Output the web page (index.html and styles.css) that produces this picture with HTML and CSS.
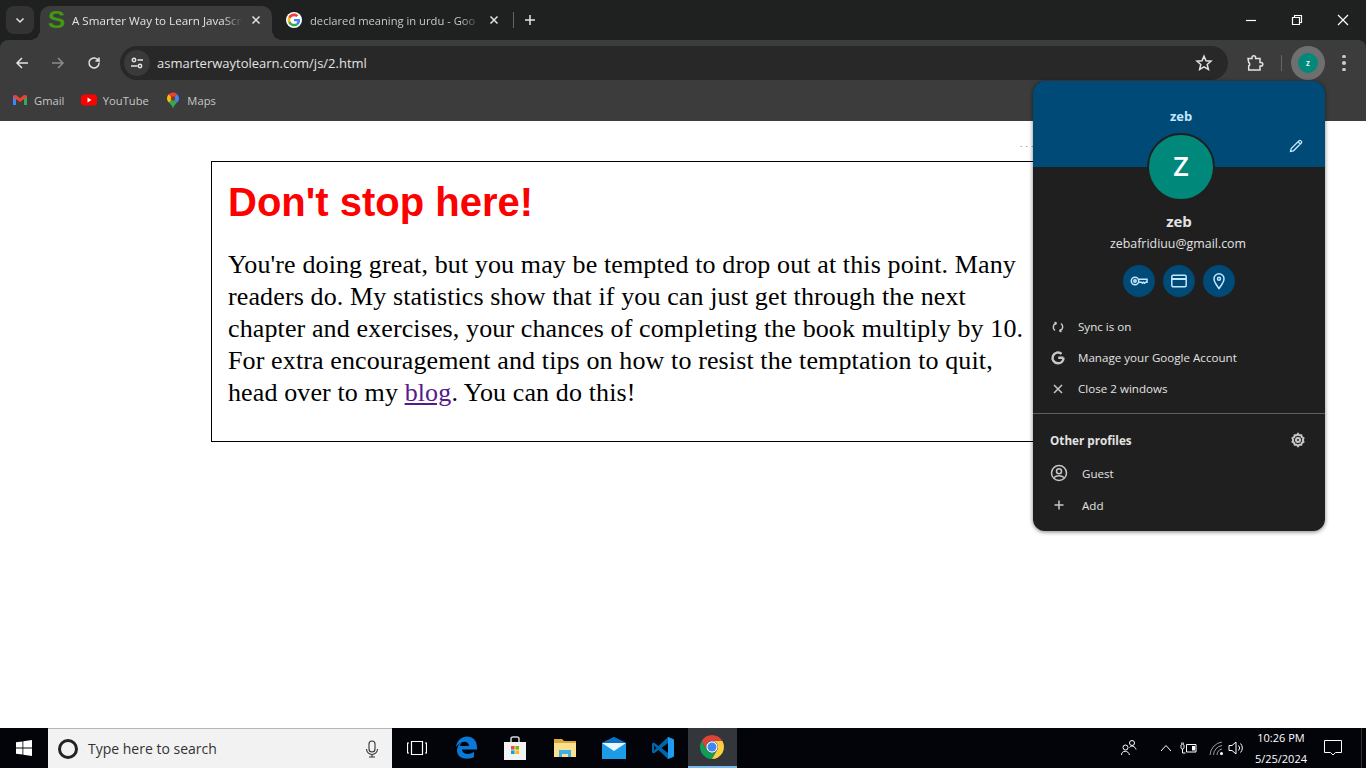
FILE: index.html
```html
<!DOCTYPE html>
<html lang="en">
<head>
    <meta charset="UTF-8">
    <title>A Smarter Way to Learn JavaScript</title>
    <link rel="stylesheet" href="styles.css">
</head>
<body>
    <!-- Browser chrome -->
    <header class="chrome">
        <div class="tabstrip">
            <button class="tab-search">
                <svg width="12" height="12" viewBox="0 0 12 12"><path d="M2.5 4.5 6 8l3.5-3.5" class="stroke-light"/></svg>
            </button>
            <div class="tab active">
                <span class="favicon-s">S</span>
                <span class="tab-title">A Smarter Way to Learn JavaScr</span>
                <svg class="tab-close" width="10" height="10" viewBox="0 0 10 10"><path d="M1.5 1.5l7 7M8.500 1.500l-7 7" class="stroke-light"/></svg>
            </div>
            <div class="tab second">
                <span class="favicon-g">
                    <svg width="16" height="16" viewBox="-6 -6 60 60"><path fill="#EA4335" d="M24 9.500c3.500 0 6.700 1.300 9.100 3.500l6.800-6.800C35.800 2.400 30.300 0 24 0 14.600 0 6.500 5.400 2.600 13.200l7.900 6.200C12.400 13.700 17.700 9.500 24 9.500z"/><path fill="#4285F4" d="M46.900 24.500c0-1.600-.1-3.100-.4-4.500H24v9h12.900c-.6 3-2.200 5.500-4.700 7.200l7.700 6c4.500-4.200 7-10.300 7-17.700z"/><path fill="#FBBC05" d="M10.500 28.600c-.5-1.500-.8-3-.8-4.600s.3-3.200.8-4.600l-7.900-6.200C.9 16.500 0 20.100 0 24s.9 7.500 2.600 10.800l7.900-6.200z"/><path fill="#34A853" d="M24 48c6.500 0 11.900-2.100 15.900-5.800l-7.700-6c-2.200 1.400-4.900 2.300-8.200 2.300-6.300 0-11.600-4.200-13.500-10l-7.900 6.200C6.500 42.600 14.600 48 24 48z"/></svg>
                </span>
                <span class="tab-title">declared meaning in urdu - Goo</span>
                <svg class="tab-close" width="10" height="10" viewBox="0 0 10 10"><path d="M1.5 1.5l7 7M8.500 1.500l-7 7" class="stroke-light"/></svg>
            </div>
            <span class="tab-divider"></span>
            <svg class="new-tab" width="12" height="12" viewBox="0 0 12 12"><path d="M6 1v10M1 6h10" class="stroke-light"/></svg>
            <div class="window-controls">
                <svg width="12" height="12" viewBox="0 0 12 12"><path d="M1 6.500h10" class="stroke-white"/></svg>
                <svg width="12" height="12" viewBox="0 0 12 12"><path d="M1.500 3.500h7v7h-7zM3.500 3.500v-2h7v7h-2" class="stroke-white"/></svg>
                <svg width="12" height="12" viewBox="0 0 12 12"><path d="M1 1l10 10M11 1 1 11" class="stroke-white"/></svg>
            </div>
        </div>

        <div class="toolbar-panel">
            <div class="toolbar">
                <svg class="nav-btn" width="16" height="16" viewBox="0 0 16 16"><path d="M14 8H3M8 3 3 8l5 5" class="stroke-light"/></svg>
                <svg class="nav-btn" width="16" height="16" viewBox="0 0 16 16"><path d="M2 8h11M8 3l5 5-5 5" class="stroke-dim"/></svg>
                <svg class="nav-btn" width="16" height="16" viewBox="0 0 16 16"><path d="M13 8a5 5 0 1 1-1.500-3.600L13 6V2.500M13 6H9.500" class="stroke-light"/></svg>
                <div class="omnibox">
                    <span class="site-info">
                        <svg width="16" height="16" viewBox="0 0 16 16"><circle cx="5" cy="5" r="1.700" class="stroke-light"/><circle cx="11" cy="11" r="1.700" class="stroke-light"/><path d="M8.500 5H14M2 11h6.500" class="stroke-light"/></svg>
                    </span>
                    <span class="url">asmarterwaytolearn.com/js/2.html</span>
                    <svg class="star" width="18" height="18" viewBox="0 0 18 18"><path d="M9 2.200l2 4.600 5 .4-3.800 3.300 1.200 4.900L9 12.800l-4.400 2.600 1.200-4.900L2 7.200l5-.4z" class="stroke-light"/></svg>
                </div>
                <svg class="ext-icon" width="18" height="18" viewBox="0 0 18 18"><path d="M2 4.500h4V3.500a1.800 1.800 0 0 1 3.600 0v1h4.400v4h1a1.800 1.800 0 0 1 0 3.600h-1v4H2.700v-4.300a1.800 1.800 0 0 0 0-3.300z" class="stroke-light"/></svg>
                <span class="toolbar-divider"></span>
                <span class="profile-btn"><span class="profile-dot">z</span></span>
                <span class="kebab"><i></i><i></i><i></i></span>
            </div>
            <div class="bookmarks">
                <span class="bookmark">
                    <svg width="16" height="16" viewBox="0 0 16 16"><path fill="#4285F4" d="M1 4v9h3V7z"/><path fill="#34A853" d="M12 7v6h3V4z"/><path fill="#EA4335" d="M1 3.500 4 3l4 3.200L12 3l3 .5V5l-7 5-7-5z"/></svg>
                    Gmail
                </span>
                <span class="bookmark">
                    <svg width="16" height="16" viewBox="0 0 16 16"><rect y="2.500" width="16" height="11" rx="3" fill="#f00"/><path d="M6.500 5.500v5l4-2.500z" fill="#fff"/></svg>
                    YouTube
                </span>
                <span class="bookmark">
                    <svg width="16" height="17" viewBox="0 0 16 16"><path fill="#34A853" d="M4 10c1.800 2 3.200 3.500 4 6 .8-2.500 2.200-4 4-6L8 6z"/><path fill="#FBBC05" d="M2 6c0 1.600.8 2.900 2 4l4-4-4.300-4.200C2.600 2.900 2 4.400 2 6z"/><path fill="#4285F4" d="M8 6l4 4c1.200-1.100 2-2.400 2-4 0-1.700-.7-3.200-1.800-4.300z"/><path fill="#EA4335" d="M3.700 1.800 8 6l4.200-4.300C11.100.6 9.600 0 8 0S4.800.7 3.700 1.800z"/><circle cx="8" cy="6" r="2.200" fill="#8a3a1c"/></svg>
                    Maps
                </span>
            </div>
        </div>
    </header>

    <!-- Page content -->
    <main class="page">
        <div class="page-dots">. . .</div>
        <section class="notice">
            <h1>Don't stop here!</h1>
            <p>You're doing great, but you may be tempted to drop out at this point. Many<br>
            readers do. My statistics show that if you can just get through the next<br>
            chapter and exercises, your chances of completing the book multiply by 10.<br>
            For extra encouragement and tips on how to resist the temptation to quit,<br>
            head over to my <a href="#">blog</a>. You can do this!</p>
        </section>
    </main>

    <!-- Profile menu -->
    <aside class="profile-menu">
        <div class="menu-banner">
            <span class="banner-name">zeb</span>
            <svg class="edit-icon" width="16" height="16" viewBox="0 0 16 16"><path d="M2.500 13.500l.7-3L11 2.700a1.300 1.300 0 0 1 1.900 0l.4.400a1.300 1.300 0 0 1 0 1.900L5.500 12.800zM10 3.700 12.300 6" class="stroke-pale"/></svg>
            <span class="menu-avatar">Z</span>
        </div>
        <div class="menu-identity">
            <div class="menu-name">zeb</div>
            <div class="menu-email">zebafridiuu@gmail.com</div>
            <div class="quick-actions">
                <span class="quick-btn"><svg width="20" height="20" viewBox="0 0 20 20"><circle cx="6" cy="10" r="3.700" class="stroke-blue"/><circle cx="6" cy="10" r="1.200" class="stroke-blue"/><path d="M9.700 8.300h8.300v3h-1.500l-1 1-1-1-1 1-1-1H9.700" class="stroke-blue"/></svg></span>
                <span class="quick-btn"><svg width="20" height="20" viewBox="0 0 20 20"><rect x="2.800" y="4.200" width="14.400" height="11.600" rx="1.500" class="stroke-blue"/><path d="M3 8h14" class="stroke-blue thick"/></svg></span>
                <span class="quick-btn"><svg width="20" height="20" viewBox="0 0 20 20"><path d="M10 17.500C8 14.500 5 11.500 5 7.800a5 5 0 0 1 10 0c0 3.700-3 6.700-5 9.700z" class="stroke-blue"/><circle cx="10" cy="7.800" r="1.500" class="stroke-blue"/></svg></span>
            </div>
        </div>
        <ul class="menu-list">
            <li class="menu-row">
                <svg width="16" height="16" viewBox="0 0 16 16"><path d="M6 4.200a4.200 4.200 0 0 0-1 7.300M10 11.800a4.200 4.200 0 0 0 1-7.300" class="stroke-grey"/><path d="M4.500 3.200 6.200 4l-.8 1.800M11.500 12.800 9.800 12l.8-1.800" class="stroke-grey"/></svg>
                Sync is on
            </li>
            <li class="menu-row">
                <svg width="16" height="16" viewBox="0 0 16 16"><path d="M13.500 7.800H8.200M13.500 7.800c.2 3.200-2.200 5.500-5.500 5.500a5.400 5.400 0 1 1 3.600-9.400" class="stroke-grey heavy"/></svg>
                Manage your Google Account
            </li>
            <li class="menu-row">
                <svg width="16" height="16" viewBox="0 0 16 16"><path d="M4 4l8 8M12 4l-8 8" class="stroke-grey"/></svg>
                Close 2 windows
            </li>
        </ul>
        <div class="menu-section">
            <div class="section-head">
                <span>Other profiles</span>
                <svg width="16" height="16" viewBox="0 0 16 16"><path d="M8 1.800l1.300 1.500 2-.1.500 1.900 1.700 1L12.800 8l.7 1.900-1.700 1-.5 1.900-2-.1L8 14.200l-1.300-1.500-2 .1-.5-1.900-1.700-1L3.200 8l-.7-1.900 1.700-1 .5-1.900 2 .1z" class="stroke-grey thick"/><circle cx="8" cy="8" r="2" class="stroke-grey thick"/></svg>
            </div>
            <div class="profile-row">
                <svg width="18" height="18" viewBox="0 0 18 18"><circle cx="9" cy="9" r="7.500" class="stroke-grey"/><circle cx="9" cy="7.200" r="2.500" class="stroke-grey"/><path d="M4 13.500c2.500-2.400 7.500-2.400 10 0" class="stroke-grey"/></svg>
                Guest
            </div>
            <div class="profile-row">
                <svg width="18" height="18" viewBox="0 0 18 18"><path d="M9 4.500v9M4.500 9h9" class="stroke-grey"/></svg>
                Add
            </div>
        </div>
    </aside>

    <!-- Windows taskbar -->
    <footer class="taskbar">
        <span class="start">
            <svg width="16" height="16" viewBox="0 0 16 16"><path fill="#fff" d="M0 2.300 6.500 1.400v6.200H0zM7.300 1.300 16 0v7.600H7.300zM0 8.400h6.500v6.200L0 13.700zM7.300 8.400H16V16l-8.700-1.200z"/></svg>
        </span>
        <div class="search-box">
            <span class="cortana"></span>
            <span class="search-text">Type here to search</span>
            <svg class="mic" width="16" height="18" viewBox="0 0 16 18"><rect x="5" y="1" width="6" height="11" rx="3" class="stroke-dark"/><path d="M2.500 9a5.500 5.500 0 0 0 11 0M8 14.500V17M5 17h6" class="stroke-dark"/></svg>
        </div>
        <div class="task-apps">
            <span class="task-app">
                <svg width="20" height="14" viewBox="0 0 20 14"><path d="M4.500 .5h11v13h-11zM2 2H.5v10H2M18 2h1.500v10H18" class="stroke-white"/></svg>
            </span>
            <span class="task-app">
                <svg width="22" height="24" viewBox="0 0 22 24"><path fill="#0a78d7" d="M1 11C2 4 7 .5 12 .5c6 0 10 4 10 11v2H7c.3 4.500 6.500 6 12 2.500v5c-4 2.500-17 3.500-17-7 0-3 2-6.500 5-8-1 1-2 2.500-2 4h9c0-5-7-6.500-13 1z"/></svg>
            </span>
            <span class="task-app">
                <svg width="24" height="24" viewBox="0 0 24 24"><path d="M8 6V3a2 2 0 0 1 2-2h4a2 2 0 0 1 2 2v3" fill="none" stroke="#d5d5d5" stroke-width="1.500"/><path fill="#f3f3f3" d="M1 6h22v18H1z"/><path fill="#f25022" d="M8 10h3.600v3.600H8z"/><path fill="#7fba00" d="M12.400 10H16v3.600h-3.600z"/><path fill="#00a4ef" d="M8 14.400h3.600V18H8z"/><path fill="#ffb900" d="M12.400 14.400H16V18h-3.600z"/></svg>
            </span>
            <span class="task-app">
                <svg width="22" height="20" viewBox="0 0 22 20"><path fill="#d9a93f" d="M0 1h8l2 2h12v16H0z"/><path fill="#fbe08e" d="M0 5h22v14H0z"/><path fill="#3eaee8" d="M5 12h12v7h-3v-3H8v3H5z"/></svg>
            </span>
            <span class="task-app">
                <svg width="24" height="22" viewBox="0 0 24 22"><path fill="#1c9ce6" d="M0 6 12 0l12 6v16H0z"/><path fill="#0a6fc2" d="M0 6l12-6 12 6-12 4z"/><path fill="#e8f6fe" d="M0 6h24L12 14z"/></svg>
            </span>
            <span class="task-app">
                <svg width="24" height="24" viewBox="0 0 24 24"><path fill="#0065a9" d="M17 1 7.500 10 3 6.500 1 7.500v9l2 1L7.500 14l9.500 9 6-2.500v-17zM17 7v10l-6.500-5zM3 9.500 5.500 12 3 14.500z"/><path fill="#1f9cf0" d="M17 1l6 2.500v17L17 23z"/></svg>
            </span>
            <span class="task-app current">
                <svg width="24" height="24" viewBox="4 4 40 40"><path fill="#db4437" d="M6.680 14A20 20 0 0 1 41.320 14H24A10 10 0 0 0 15.340 29z"/><path fill="#0f9d58" d="M6.680 14 15.340 29A10 10 0 0 0 32.660 29L24 44A20 20 0 0 1 6.680 14z"/><path fill="#ffcd40" d="M41.320 14H24A10 10 0 0 1 32.660 29L24 44A20 20 0 0 0 41.320 14z"/><circle cx="24" cy="24" r="9.500" fill="#fff"/><circle cx="24" cy="24" r="7.500" fill="#4285f4"/></svg>
            </span>
        </div>
        <div class="tray">
            <svg class="tray-people" width="18" height="18" viewBox="0 0 18 18"><circle cx="5.500" cy="8.500" r="2.500" class="stroke-white thin"/><circle cx="12" cy="4" r="2.500" class="stroke-white thin"/><path d="M1.500 16c0-5 7-5 8 0M9.500 8.500c2-2.500 5.500-1.500 6.500 2" class="stroke-white thin"/></svg>
            <svg class="tray-chevron" width="12" height="8" viewBox="0 0 12 8"><path d="M1 7l5-5.500L11 7" class="stroke-white thin"/></svg>
            <svg class="tray-battery" width="18" height="14" viewBox="0 0 18 14"><path d="M6.500 3.500H16v7.500H6.500zM4 4v2.500a1.500 1.500 0 0 1-3 0V4M1.800 4V1.500M3.200 4V1.500M2.500 8v4h3" class="stroke-white thin"/><path fill="#fff" d="M12 5h3v4.500h-3z"/></svg>
            <svg class="tray-wifi" width="18" height="16" viewBox="0 0 18 16"><path d="M1 15A14 14 0 0 1 13 2M4.500 15a10 10 0 0 1 8.500-9.500M8 15a6.500 6.500 0 0 1 5-6" class="stroke-white thin faded"/><circle cx="12.500" cy="13.500" r="1.500" fill="#fff"/></svg>
            <svg width="18" height="16" viewBox="0 0 18 16"><path d="M1 5.500h3L8 2v12l-4-3.500H1zM10.500 5.500a3.500 3.500 0 0 1 0 5M12.500 3.500a6.500 6.500 0 0 1 0 9" class="stroke-white thin"/></svg>
            <div class="clock"><span>10:26 PM</span><span>5/25/2024</span></div>
            <svg width="18" height="16" viewBox="0 0 18 16"><path d="M.5.500h17v12h-6L9 15l-2.500-2.500h-6z" class="stroke-white thin"/></svg>
            <span class="show-desktop"></span>
        </div>
    </footer>
</body>
</html>
```

FILE: styles.css
```css
/* Reset */
* {
    margin: 0;
    padding: 0;
    box-sizing: border-box;
}

:root {
    --strip: #1f2020;
    --panel: #3c3c3c;
    --omnibox: #282828;
    --menu: #1f1f1f;
    --banner: #004a77;
    --pale-blue: #c2e7ff;
    --teal: #00897b;
}

html, body {
    height: 100%;
}

body {
    display: flex;
    flex-direction: column;
    height: 100vh;
    overflow: hidden;
    background: #fff;
    font-family: "Open Sans", "Noto Sans", sans-serif;
}

svg {
    display: block;
    flex: none;
}

/* Shared svg strokes */
.stroke-light, .stroke-white, .stroke-dim, .stroke-pale, .stroke-blue, .stroke-grey, .stroke-dark {
    fill: none;
    stroke-width: 1.5;
}
.stroke-light { stroke: #e3e3e3; }
.stroke-white { stroke: #fff; stroke-width: 1.2; }
.stroke-dim { stroke: #8b8b8b; }
.stroke-pale { stroke: var(--pale-blue); stroke-width: 1.3; }
.stroke-blue { stroke: var(--pale-blue); }
.stroke-grey { stroke: #c7c7c7; }
.stroke-dark { stroke: #333; stroke-width: 1.1; }
.thick { stroke-width: 2; }
.heavy { stroke-width: 2.4; }
.thin { stroke-width: 1; }
.faded { opacity: 0.6; }

/* Tab strip */
.chrome {
    flex: none;
    height: 121px;
    background: var(--strip);
    color: #e3e3e3;
}

.tabstrip {
    height: 40px;
    display: flex;
    align-items: flex-end;
    padding-left: 6px;
}

.tab-search {
    width: 28px;
    height: 28px;
    margin: 0 6px 6px 0;
    border: none;
    border-radius: 8px;
    background: #333;
    display: flex;
    align-items: center;
    justify-content: center;
}

.tab {
    position: relative;
    width: 232px;
    height: 34px;
    display: flex;
    align-items: center;
    padding: 0 11px 6px 8px;
    font-size: 11.6px;
    color: #c7c7c7;
}

.tab.active {
    background: var(--panel);
    border-radius: 10px 10px 0 0;
    color: #e3e3e3;
}

/* concave corners where the active tab meets the toolbar */
.tab.active::before,
.tab.active::after {
    content: "";
    position: absolute;
    bottom: 0;
    width: 10px;
    height: 10px;
}

.tab.active::before {
    left: -10px;
    background: radial-gradient(circle at 0 0, transparent 10px, var(--panel) 10px);
}

.tab.active::after {
    right: -10px;
    background: radial-gradient(circle at 100% 0, transparent 10px, var(--panel) 10px);
}

.tab.second {
    width: 242px;
    padding: 0 15px 6px 14px;
    font-size: 11.2px;
}

.favicon-s {
    width: 17px;
    margin-right: 7px;
    color: #3f9a12;
    font: bold 23px/20px "Liberation Sans", sans-serif;
    text-align: center;
    transform: scaleX(1.15);
}

.favicon-g {
    width: 16px;
    height: 16px;
    margin-right: 8px;
    border-radius: 50%;
    background: #fff;
    flex: none;
}

.tab-title {
    flex: 1;
    white-space: nowrap;
    -webkit-mask-image: linear-gradient(to right, #000 88%, transparent);
    mask-image: linear-gradient(to right, #000 88%, transparent);
}

.tab-close {
    margin-left: 8px;
}

.tab-divider {
    width: 1px;
    height: 16px;
    margin: 0 0 12px -1px;
    background: #5f6368;
}

.new-tab {
    margin: 0 0 14px 10px;
}

.window-controls {
    margin-left: auto;
    align-self: stretch;
    display: flex;
    align-items: center;
    gap: 34px;
    padding-right: 17px;
}

/* Toolbar */
.toolbar-panel {
    height: 81px;
    background: var(--panel);
    border-top-left-radius: 8px;
    border-top-right-radius: 8px;
}

.toolbar {
    height: 46px;
    display: flex;
    align-items: center;
    padding-left: 14px;
}

.nav-btn {
    margin-right: 20px;
}

.omnibox {
    width: 1108px;
    height: 34px;
    margin-left: -2px;
    border-radius: 17px;
    background: var(--omnibox);
    display: flex;
    align-items: center;
    padding: 0 15px 0 4px;
}

.site-info {
    width: 26px;
    height: 26px;
    border-radius: 50%;
    background: #3a3a3a;
    display: flex;
    align-items: center;
    justify-content: center;
    margin-right: 7px;
}

.url {
    flex: 1;
    font-size: 13px;
    color: #e3e3e3;
}

.ext-icon {
    margin-left: 18px;
}

.toolbar-divider {
    width: 1px;
    height: 16px;
    margin: 0 9px 0 17px;
    background: #666;
}

.profile-btn {
    width: 34px;
    height: 34px;
    border-radius: 50%;
    background: #6f6f6f;
    display: flex;
    align-items: center;
    justify-content: center;
}

.profile-dot {
    width: 20px;
    height: 20px;
    border-radius: 50%;
    background: var(--teal);
    color: #fff;
    font-size: 8px;
    font-weight: 600;
    text-align: center;
    line-height: 19px;
}

.kebab {
    margin-left: 17px;
    display: flex;
    flex-direction: column;
    gap: 3px;
}

.kebab i {
    display: block;
    width: 3.5px;
    height: 3.5px;
    border-radius: 50%;
    background: #c7c7c7;
}

/* Bookmarks bar */
.bookmarks {
    height: 35px;
    display: flex;
    align-items: center;
    padding: 0 0 7px 12px;
    gap: 16.5px;
    font-size: 11.2px;
    color: #c7c7c7;
}

.bookmark {
    display: flex;
    align-items: center;
    gap: 6px;
}

/* Page */
.page {
    flex: 1;
    position: relative;
    padding: 40px 0 0 211px;
}

.page-dots {
    position: absolute;
    top: 19px;
    left: 1020px;
    font: 8px "Liberation Sans", sans-serif;
    letter-spacing: 0.55px;
    color: #333;
}

.notice {
    width: 860px;
    height: 281px;
    border: 1px solid #000;
    padding: 16px;
}

.notice h1 {
    font: bold 40px/48px "Liberation Sans", Arial, sans-serif;
    color: #f00;
    margin-bottom: 23px;
}

.notice p {
    font: 26px/32px "Liberation Serif", serif;
    letter-spacing: 0.12px;
    color: #000;
    white-space: nowrap;
}

.notice a {
    color: #551a8b;
}

/* Profile menu */
.profile-menu {
    position: absolute;
    top: 81px;
    left: 1033px;
    width: 292px;
    height: 450px;
    border-radius: 12px;
    background: var(--menu);
    overflow: hidden;
    box-shadow: 0 1px 4px rgba(0, 0, 0, 0.5);
    color: #e3e3e3;
}

.menu-banner {
    height: 86px;
    background: var(--banner);
    position: relative;
    text-align: center;
    padding: 23px 0 0 4px;
}

.banner-name {
    font-size: 13px;
    font-weight: 700;
    color: var(--pale-blue);
}

.edit-icon {
    position: absolute;
    top: 57px;
    right: 21px;
}

.menu-avatar {
    position: absolute;
    top: 52px;
    left: 114px;
    width: 68px;
    height: 68px;
    border-radius: 50%;
    background: var(--teal);
    border: 2px solid #1f1f1f;
    color: #fff;
    font-size: 27px;
    font-weight: 600;
    line-height: 62px;
    text-align: center;
}

.menu-identity {
    padding-top: 44px;
    text-align: center;
}

.menu-name {
    font-size: 15px;
    font-weight: 700;
    line-height: 20px;
}

.menu-email {
    font-size: 12.4px;
    line-height: 20px;
    margin-top: 3px;
    padding-right: 2px;
}

.quick-actions {
    display: flex;
    justify-content: center;
    gap: 8px;
    margin-top: 11px;
}

.quick-btn {
    width: 32px;
    height: 32px;
    border-radius: 50%;
    background: var(--banner);
    display: flex;
    align-items: center;
    justify-content: center;
}

.menu-list {
    list-style: none;
    margin-top: 14px;
    padding-bottom: 9px;
    border-bottom: 1px solid #5e5e5e;
}

.menu-row {
    height: 31px;
    display: flex;
    align-items: center;
    gap: 12px;
    padding-left: 17px;
    font-size: 11.6px;
}

.menu-section {
    padding: 0 17px;
}

.section-head {
    height: 35px;
    margin-top: 8px;
    display: flex;
    align-items: center;
    justify-content: space-between;
    font-size: 11.7px;
    font-weight: 700;
}

.section-head svg {
    margin-right: 2px;
}

.profile-row {
    height: 32px;
    display: flex;
    align-items: center;
    gap: 14px;
    font-size: 11.6px;
}

/* Taskbar */
.taskbar {
    flex: none;
    height: 40px;
    background: #02040a;
    display: flex;
    align-items: stretch;
    position: relative;
}

.start {
    width: 48px;
    display: flex;
    align-items: center;
    justify-content: center;
}

.search-box {
    width: 344px;
    background: #f2f2f2;
    border-top: 1px solid #b5b5b5;
    display: flex;
    align-items: center;
    padding: 0 12px 0 10px;
    color: #333;
}

.cortana {
    width: 20px;
    height: 20px;
    border: 3px solid #222;
    border-radius: 50%;
}

.search-text {
    flex: 1;
    margin-left: 10px;
    font-size: 14px;
}

.task-apps {
    display: flex;
}

.task-app {
    width: 49.3px;
    display: flex;
    align-items: center;
    justify-content: center;
}

.task-app.current {
    background: #33363b;
    border-bottom: 2px solid #76b9ed;
}

.tray {
    margin-left: auto;
    display: flex;
    align-items: center;
    color: #fff;
    padding-right: 4px;
}

.tray-people {
    margin-right: 22px;
}

.tray-chevron {
    margin-right: 8px;
}

.tray-battery {
    margin-right: 11px;
}

.tray-wifi {
    margin-right: 1px;
}

.clock {
    display: flex;
    flex-direction: column;
    align-items: center;
    margin: 0 17px 0 9px;
    font-size: 11px;
    line-height: 21px;
}

.show-desktop {
    width: 1px;
    height: 40px;
    margin-left: 19px;
    background: #333;
}
```
